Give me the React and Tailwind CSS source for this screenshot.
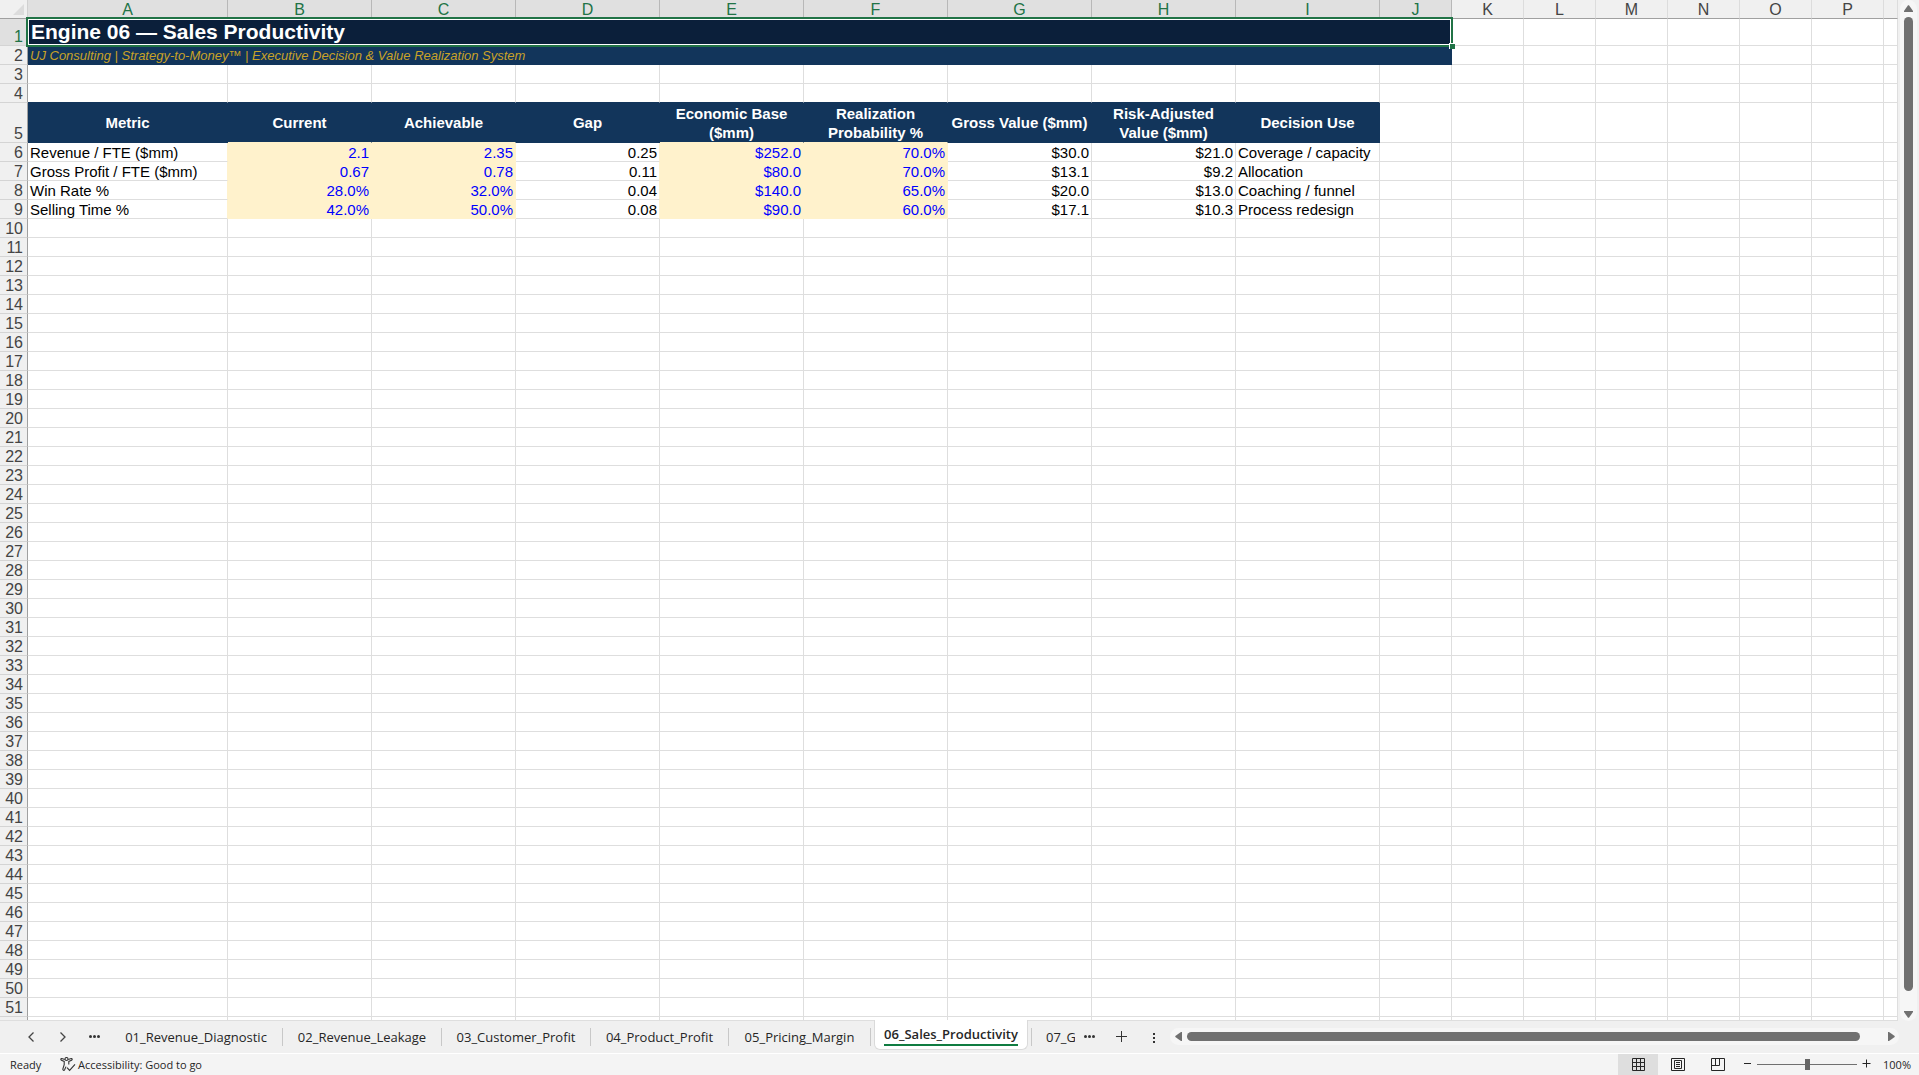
import React from "react";

const NAVY = "bg-[#12355b] border-[#12355b]";
const GRID = "border-[#dedede]";

const columns = [
  { id: "A", width: "w-[200px]" },
  ...["B", "C", "D", "E", "F", "G", "H", "I"].map((id) => ({ id, width: "w-[144px]" })),
  ...["J", "K", "L", "M", "N", "O", "P"].map((id) => ({ id, width: "w-[72px]" })),
  { id: "", width: "" },
];

const headings = [
  "Metric",
  "Current",
  "Achievable",
  "Gap",
  "Economic Base ($mm)",
  "Realization Probability %",
  "Gross Value ($mm)",
  "Risk-Adjusted Value ($mm)",
  "Decision Use",
];

const metrics = [
  ["Revenue / FTE ($mm)", "2.1", "2.35", "0.25", "$252.0", "70.0%", "$30.0", "$21.0", "Coverage / capacity"],
  ["Gross Profit / FTE ($mm)", "0.67", "0.78", "0.11", "$80.0", "70.0%", "$13.1", "$9.2", "Allocation"],
  ["Win Rate %", "28.0%", "32.0%", "0.04", "$140.0", "65.0%", "$20.0", "$13.0", "Coaching / funnel"],
  ["Selling Time %", "42.0%", "50.0%", "0.08", "$90.0", "60.0%", "$17.1", "$10.3", "Process redesign"],
];

const isInput = (c) => c === 1 || c === 2 || c === 4 || c === 5;

const tabs = [
  { name: "01_Revenue_Diagnostic", width: "w-[173px]" },
  { name: "02_Revenue_Leakage", width: "w-[159px]" },
  { name: "03_Customer_Profit", width: "w-[149px]" },
  { name: "04_Product_Profit", width: "w-[138px]" },
  { name: "05_Pricing_Margin", width: "w-[142px]" },
];

function RowHead({ n, active }) {
  return (
    <th
      scope="row"
      className={
        "border-r border-b border-r-[#a0a0a0] border-b-[#d4d4d4] p-0 pr-1 text-right align-bottom text-base leading-4 font-normal " +
        (active ? "bg-[#e0e0e0] text-[#217346]" : "bg-[#f0f0f0] text-[#444444]")
      }
    >
      {n}
    </th>
  );
}

function EmptyCells({ from, to = 17, row }) {
  const cells = [];
  for (let c = from; c < to; c++) {
    let bottom = "border-b-[#dedede]";
    if (row === 4 && c < 9) bottom = "border-b-[#12355b]";
    cells.push(<td key={c} className={"border-r border-b border-r-[#dedede] p-0 " + bottom} />);
  }
  return cells;
}

function Sheet() {
  const blankRows = [];
  for (let n = 10; n <= 52; n++) blankRows.push(n);
  return (
    <table className="w-full table-fixed border-separate border-spacing-0 bg-white font-['Liberation_Sans',Arial,sans-serif] text-[15px] leading-4 text-black">
      <colgroup>
        <col className="w-7" />
        {columns.map((c, i) => (
          <col key={i} className={c.width} />
        ))}
      </colgroup>
      <thead>
        <tr className="h-[19px]">
          <td className="border-r border-b border-r-[#d0d0d0] border-b-[#a0a0a0] bg-[#f0f0f0] p-0">
            <button aria-label="Select all" className="flex h-[18px] w-full items-end justify-end pr-[3px] pb-[3px]">
              <svg width="11" height="11" viewBox="0 0 11 11" fill="#dcdcdc">
                <path d="M11 0V11H0Z" />
              </svg>
            </button>
          </td>
          {columns.map((c, i) => (
            <th
              key={i}
              scope="col"
              className={
                "border-r border-b border-b-[#a0a0a0] p-0 pt-0.5 text-center text-base leading-4 font-normal " +
                (i < 10 ? "border-r-[#b8b8b8] bg-[#e0e0e0] text-[#217346]" : "border-r-[#dcdcdc] bg-[#f0f0f0] text-[#444444]")
              }
            >
              {c.id}
            </th>
          ))}
        </tr>
      </thead>
      <tbody>
        <tr className="h-[27px]">
          <RowHead n={1} active />
          <td colSpan={10} className="relative bg-[#0b1f3a] p-0 pb-0.5 pl-[3px] text-[21px] leading-6 font-bold text-white">
            Engine 06 — Sales Productivity
            <div className="pointer-events-none absolute -top-0.5 -right-px -bottom-px -left-0.5 z-10 border-2 border-[#217346]">
              <div className="h-full border border-white" />
            </div>
            <div className="absolute -right-[3px] -bottom-[3px] z-20 size-1.5 border-t border-l border-white bg-[#217346]" />
          </td>
          <EmptyCells from={10} />
        </tr>
        <tr className="h-[19px]">
          <RowHead n={2} />
          <td colSpan={10} className={"border-r border-b p-0 pt-0.5 pl-0.5 text-[13px] leading-4 text-[#c9a227] italic " + NAVY}>
            UJ Consulting | Strategy-to-Money™ | Executive Decision &amp; Value Realization System
          </td>
          <EmptyCells from={10} />
        </tr>
        <tr className="h-[19px]">
          <RowHead n={3} />
          <EmptyCells from={0} />
        </tr>
        <tr className="h-[19px]">
          <RowHead n={4} />
          <EmptyCells from={0} row={4} />
        </tr>
        <tr className="h-[40px]">
          <RowHead n={5} />
          {headings.map((h, c) => (
            <td
              key={h}
              className={
                "border-r border-b border-r-[#12355b] bg-[#12355b] px-0.5 py-0 text-center text-[15px] leading-[19px] font-bold text-white " +
                (isInput(c) ? "border-b-[#fff2cc]" : "border-b-[#12355b]")
              }
            >
              {h}
            </td>
          ))}
          <EmptyCells from={9} />
        </tr>
        {metrics.map((m, r) => (
          <tr key={r} className="h-[19px]">
            <RowHead n={r + 6} />
            {m.map((v, c) => (
              <td
                key={c}
                className={
                  "border-r border-b px-0.5 pt-0.5 pb-0 whitespace-nowrap " +
                  (c === 0 || c === 8 ? "text-left " : "text-right ") +
                  (isInput(c) ? "border-b-[#fff2cc] bg-[#fff2cc] text-[#0000ff] " : "border-b-[#dedede] ") +
                  (isInput(c) || isInput(c + 1) ? "border-r-[#fff2cc]" : "border-r-[#dedede]")
                }
              >
                {v}
              </td>
            ))}
            <EmptyCells from={9} />
          </tr>
        ))}
        {blankRows.map((n) => (
          <tr key={n} className="h-[19px]">
            <RowHead n={n === 52 ? "" : n} />
            <EmptyCells from={0} />
          </tr>
        ))}
      </tbody>
    </table>
  );
}

function VerticalScroll() {
  return (
    <div className="mr-0.5 ml-0.5 flex w-[17px] shrink-0 flex-col items-center rounded-full bg-[#f6f6f6]">
      <button aria-label="Scroll up" className="flex h-[17px] w-full items-center justify-center">
        <svg width="9" height="7" viewBox="0 0 9 7" fill="#707070">
          <path d="M4 0.3H5L9 6V7H0V6Z" />
        </svg>
      </button>
      <div className="w-[9px] flex-1 rounded-full bg-[#707070]" />
      <button aria-label="Scroll down" className="flex h-[30px] w-full items-end justify-center pb-[3px]">
        <svg width="9" height="7" viewBox="0 0 9 7" fill="#707070">
          <path d="M4 6.7H5L9 1V0H0V1Z" />
        </svg>
      </button>
    </div>
  );
}

function Dots() {
  return (
    <svg width="11" height="3" viewBox="0 0 11 3" fill="#333333">
      <circle cx="1.5" cy="1.5" r="1.5" />
      <circle cx="5.5" cy="1.5" r="1.5" />
      <circle cx="9.5" cy="1.5" r="1.5" />
    </svg>
  );
}

function TabBar() {
  return (
    <div className="flex h-8 shrink-0 items-start bg-[#f0f0f0] font-['Open_Sans','Noto_Sans',sans-serif] text-[13px] text-[#262626]">
      <div className="flex h-[31px] items-center pl-[15px]">
        <button aria-label="Previous sheet" className="flex h-6 w-8 items-center justify-center">
          <svg width="6" height="10" viewBox="0 0 6 10" fill="none" stroke="#444444" strokeWidth="1.3">
            <path d="M5.5 0.5L1 5L5.5 9.5" />
          </svg>
        </button>
        <button aria-label="Next sheet" className="flex h-6 w-8 items-center justify-center">
          <svg width="6" height="10" viewBox="0 0 6 10" fill="none" stroke="#444444" strokeWidth="1.3">
            <path d="M0.5 0.5L5 5L0.5 9.5" />
          </svg>
        </button>
        <button aria-label="More sheets" className="flex h-6 w-[31px] items-center justify-center">
          <Dots />
        </button>
      </div>
      <div className="flex h-[31px] items-center">
        {tabs.map((t) => (
          <button key={t.name} className={"h-[18px] border-r border-[#c8c8c8] text-center leading-[18px] " + t.width}>
            {t.name}
          </button>
        ))}
      </div>
      <button className="relative z-10 -mt-px ml-[3px] flex h-[30px] w-[154px] shrink-0 items-end justify-center rounded-b-md border border-t-0 border-[#dadada] bg-white pb-[3px] font-semibold">
        <span className="border-b-2 border-[#107c41] leading-5">06_Sales_Productivity</span>
      </button>
      <div className="flex h-[31px] items-center">
        <button className="ml-[3px] h-[18px] w-11 overflow-hidden border-l border-[#c8c8c8] pl-3.5 text-left leading-[18px]">
          07_G
        </button>
        <button aria-label="More sheets to the right" className="flex h-6 w-7 items-center justify-center">
          <Dots />
        </button>
        <button aria-label="New sheet" className="flex h-6 w-9 items-center justify-center">
          <svg width="11" height="11" viewBox="0 0 11 11" stroke="#333333">
            <path d="M5.5 0V11M0 5.5H11" />
          </svg>
        </button>
        <div className="flex w-[30px] items-center justify-center pt-0.5">
          <svg width="2" height="10" viewBox="0 0 2 10" fill="#333333">
            <path d="M0 0H2V2H0ZM0 4H2V6H0ZM0 8H2V10H0Z" />
          </svg>
        </div>
      </div>
      <div className="mt-[7px] mr-5 ml-px flex h-[17px] min-w-0 flex-1 items-center rounded-full bg-[#f6f6f6]">
        <button aria-label="Scroll left" className="flex h-full w-[17px] items-center justify-center">
          <svg width="7" height="9" viewBox="0 0 7 9" fill="#707070">
            <path d="M0.3 4V5L6 9H7V0H6Z" />
          </svg>
        </button>
        <div className="h-[9px] flex-1 rounded-full bg-[#707070]" />
        <button aria-label="Scroll right" className="flex h-full w-[39px] items-center justify-end pr-1">
          <svg width="7" height="9" viewBox="0 0 7 9" fill="#707070">
            <path d="M6.7 4V5L1 9H0V0H1Z" />
          </svg>
        </button>
      </div>
    </div>
  );
}

function StatusBar() {
  return (
    <div className="flex h-[22px] shrink-0 items-stretch border-t border-white bg-[#f4f4f4] font-['Open_Sans','Noto_Sans',sans-serif] text-[11px] leading-[21px] text-[#262626]">
      <span className="w-[60px] pl-2.5">Ready</span>
      <button className="flex items-center gap-0.5">
        <svg width="16" height="15" viewBox="0 0 16 15" fill="none" stroke="#333333" strokeWidth="1.1">
          <circle cx="6.5" cy="2" r="1.5" />
          <path d="M4.8 2.6L1.8 1.6C0.7 1.4 0.4 2.8 1.4 3.2L4.2 4.4V7.6L2.8 12.2C2.6 13.4 4.1 13.8 4.6 12.8L6 9.6M8.2 2.6L11.2 1.6C12.3 1.4 12.6 2.8 11.6 3.2L8.8 4.4V7.4" />
          <path d="M7 10.6L9.6 13.4L15 7.4" />
        </svg>
        Accessibility: Good to go
      </button>
      <div className="ml-auto flex">
        <button aria-label="Normal view" aria-pressed="true" className="flex w-10 items-center justify-center bg-[#dedede]">
          <svg width="13" height="13" viewBox="0 0 13 13" fill="none" stroke="#262626">
            <path d="M0.5 0.5H12.5V12.5H0.5ZM4.5 0V13M8.5 0V13M0 4.5H13M0 8.5H13" />
          </svg>
        </button>
        <button aria-label="Page layout" className="flex w-10 items-center justify-center">
          <svg width="14" height="13" viewBox="0 0 14 13" fill="none" stroke="#262626">
            <path d="M0.5 0.5H13.5V12.5H0.5ZM3.5 2.5H10.5V10.5H3.5ZM5 4.5H9M5 6.5H9M5 8.5H9" />
          </svg>
        </button>
        <button aria-label="Page break preview" className="flex w-10 items-center justify-center">
          <svg width="14" height="13" viewBox="0 0 14 13" fill="none" stroke="#262626">
            <path d="M0.5 0.5H13.5V12.5H0.5ZM0.5 7.5H8.5V0.5M4.5 0.5V7.5" />
          </svg>
        </button>
        <button aria-label="Zoom out" className="ml-1.5 flex w-[13px] items-center pb-0.5">
          <svg width="7" height="9" viewBox="0 0 7 9" stroke="#262626">
            <path d="M0 4.5H7" />
          </svg>
        </button>
        <input
          type="range"
          aria-label="Zoom"
          min="10"
          max="190"
          defaultValue="100"
          className="h-5 w-[100px] appearance-none bg-transparent [&::-webkit-slider-runnable-track]:h-px [&::-webkit-slider-runnable-track]:bg-[#707070] [&::-webkit-slider-thumb]:-mt-[5px] [&::-webkit-slider-thumb]:h-[11px] [&::-webkit-slider-thumb]:w-[5px] [&::-webkit-slider-thumb]:appearance-none [&::-webkit-slider-thumb]:bg-[#666666]"
        />
        <button aria-label="Zoom in" className="ml-[5px] flex w-[13px] items-center pb-0.5">
          <svg width="9" height="9" viewBox="0 0 9 9" stroke="#262626">
            <path d="M0.5 4.5H8.5M4.5 0.5V8.5" />
          </svg>
        </button>
        <button className="w-11 pr-2 text-right leading-[19px]">100%</button>
      </div>
    </div>
  );
}

export default function App() {
  return (
    <div className="flex h-screen flex-col overflow-hidden bg-[#f0f0f0]">
      <div className="flex min-h-0 flex-1">
        <div className={"min-w-0 flex-1 overflow-hidden border-b " + GRID}>
          <Sheet />
        </div>
        <VerticalScroll />
      </div>
      <TabBar />
      <StatusBar />
    </div>
  );
}
